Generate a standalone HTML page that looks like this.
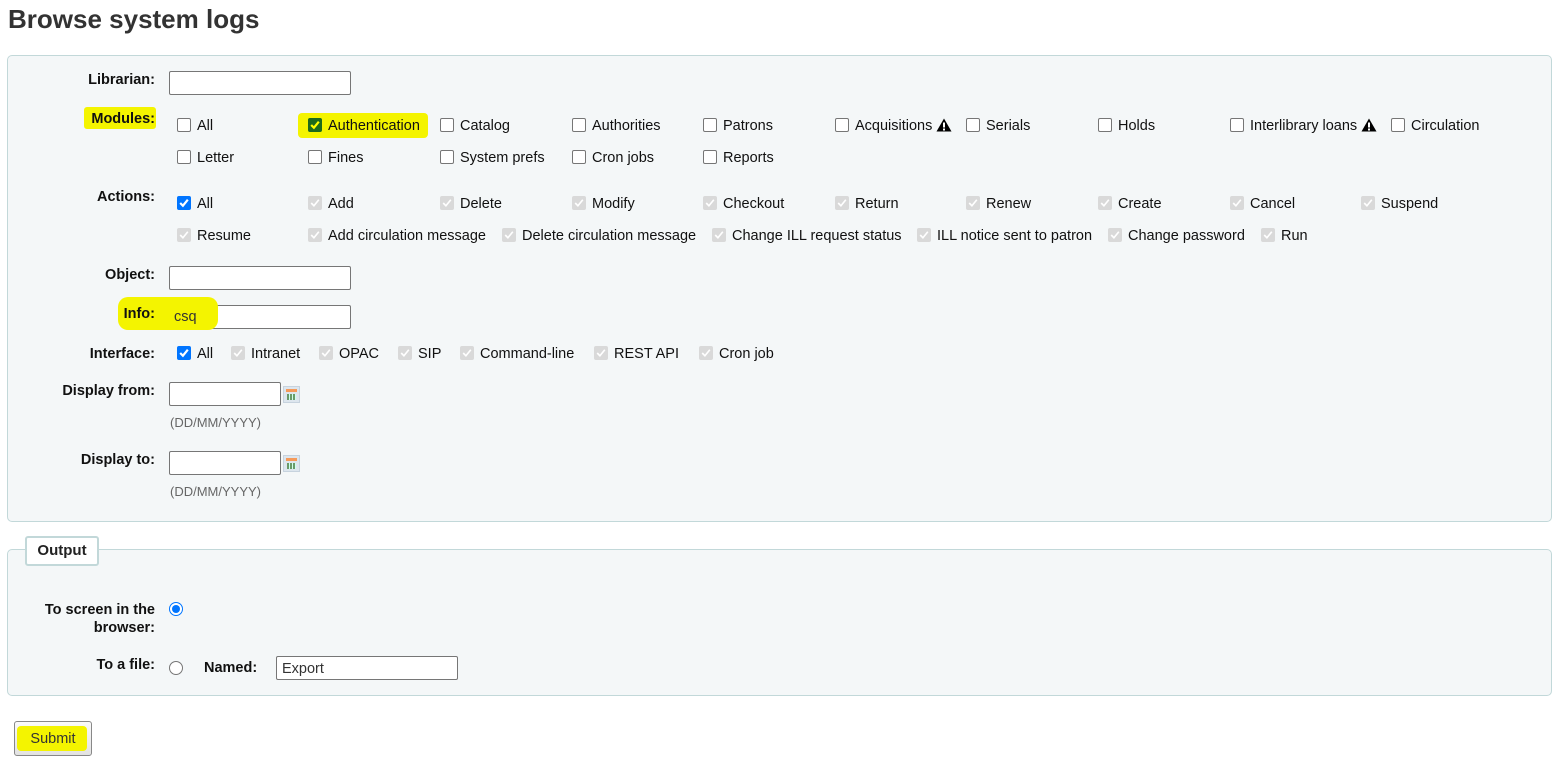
<!DOCTYPE html>
<html><head><meta charset="utf-8"><style>
body{margin:0;width:1559px;height:759px;background:#fff;font-family:"Liberation Sans",Arial,sans-serif;font-size:14.5px;color:#111;position:relative;overflow:hidden}
.a{position:absolute;white-space:nowrap}
h1{position:absolute;left:8px;top:4px;margin:0;font-size:26px;font-weight:bold;color:#333}
.fs{position:absolute;background:#f4f7f8;border:1px solid #c2d8d9;border-radius:5px}
.lb{position:absolute;right:1404px;font-weight:bold;text-align:right;white-space:nowrap;line-height:18px}
.in{position:absolute;background:#fff;border:1px solid #767676;border-radius:2px;box-sizing:border-box}
.c{position:absolute;display:flex;align-items:center;white-space:nowrap;height:18px}
.c i{display:inline-block;width:14px;height:14px;box-sizing:border-box;border-radius:2px;margin-right:6px;position:relative;top:-1px}
.u{border:1px solid #767676;background:#fff}
.b{background:#0075ff}.g{background:#1c6a1c}.d{background:#d9d9d9}
.c i svg{position:absolute;left:1px;top:1px}
.hl{background:#f4f400}
.hint{position:absolute;left:170px;color:#666;font-size:13px}
.cal{position:absolute;width:17px;height:17px;background:#dde6ee;border:1px solid #c7d3de;box-sizing:border-box}
.cal:before{content:"";position:absolute;left:2px;top:2px;width:11px;height:3px;background:#f59a5a}
.cal:after{content:"";position:absolute;left:3px;top:7px;width:9px;height:6px;background:repeating-linear-gradient(90deg,#6a9a6a 0 2px,#cfe 2px 3px)}
.tri{display:inline-block;margin-left:4px;position:relative;top:-1px}
</style></head><body>
<h1>Browse system logs</h1>
<div class="fs" style="left:7px;top:55px;width:1543px;height:465px"></div>
<div class="fs" style="left:7px;top:549px;width:1543px;height:145px"></div>
<div class="a" style="left:25px;top:536px;width:70px;height:26px;border:2px solid #c2d8d9;border-radius:3px;background:#fff;font-weight:bold;font-size:15px;text-align:center;line-height:26px;color:#222">Output</div>

<div class="lb" style="top:71px">Librarian:</div>
<div class="in" style="left:169px;top:71px;width:182px;height:24px"></div>
<div class="a hl" style="left:84px;top:107px;width:72px;height:22px;border-radius:3px"></div>
<div class="lb" style="top:110px">Modules:</div>
<div class="lb" style="top:188px">Actions:</div>
<div class="lb" style="top:266px">Object:</div>
<div class="in" style="left:169px;top:266px;width:182px;height:24px"></div>
<div class="in" style="left:169px;top:305px;width:182px;height:24px"></div>
<div class="a hl" style="left:118px;top:297px;width:100px;height:33px;border-radius:10px"></div>
<div class="lb" style="top:305px">Info:</div>
<div class="a" style="left:174px;top:309px;color:#333">csq</div>
<div class="lb" style="top:345px">Interface:</div>
<div class="lb" style="top:382px">Display from:</div>
<div class="in" style="left:169px;top:382px;width:112px;height:24px"></div>
<div class="cal" style="left:283px;top:386px"></div>
<div class="hint" style="top:415px">(DD/MM/YYYY)</div>
<div class="lb" style="top:451px">Display to:</div>
<div class="in" style="left:169px;top:451px;width:112px;height:24px"></div>
<div class="cal" style="left:283px;top:455px"></div>
<div class="hint" style="top:484px">(DD/MM/YYYY)</div>

<div class="lb" style="top:601px">To screen in the<br>browser:</div>
<div class="a" style="left:169px;top:602px;width:14px;height:14px;border-radius:50%;border:1px solid #0075ff;box-sizing:border-box;background:#fff"><div style="position:absolute;left:2px;top:2px;width:8px;height:8px;border-radius:50%;background:#0075ff"></div></div>
<div class="lb" style="top:656px">To a file:</div>
<div class="a" style="left:169px;top:661px;width:14px;height:14px;border-radius:50%;border:1px solid #767676;box-sizing:border-box;background:#fff"></div>
<div class="a" style="left:204px;top:660px;font-weight:bold">Named:</div>
<div class="in" style="left:276px;top:656px;width:182px;height:24px;padding:4px 5px;color:#333">Export</div>

<div class="a" style="left:14px;top:721px;width:78px;height:35px;border:1px solid #888;border-radius:3px;background:linear-gradient(#fafafa,#e2e2e2);box-sizing:border-box"><div style="position:absolute;left:2px;top:4px;width:70px;height:25px;background:#f4f400;border-radius:4px"></div><div style="position:absolute;left:0;right:0;top:9px;text-align:center;color:#333">Submit</div></div>

<div class="a hl" style="left:298px;top:113px;width:130px;height:25px;border-radius:4px"></div>

<!-- modules -->
<div class="c" style="left:177px;top:117px"><i class="u"></i>All</div>
<div class="c" style="left:308px;top:117px"><i class="g"><svg width="12" height="12" viewBox="0 0 11 11"><path d="M2 5.5L4.5 8L9 2.5" stroke="#ff0" stroke-width="2" fill="none"/></svg></i>Authentication</div>
<div class="c" style="left:440px;top:117px"><i class="u"></i>Catalog</div>
<div class="c" style="left:572px;top:117px"><i class="u"></i>Authorities</div>
<div class="c" style="left:703px;top:117px"><i class="u"></i>Patrons</div>
<div class="c" style="left:835px;top:117px"><i class="u"></i>Acquisitions<svg class="tri" width="16" height="14" viewBox="0 0 16 14"><path d="M8 0.5L15.5 13.5H0.5Z" fill="#000"/><rect x="7" y="4.5" width="2" height="5" fill="#fff"/><rect x="7" y="10.5" width="2" height="2" fill="#fff"/></svg></div>
<div class="c" style="left:966px;top:117px"><i class="u"></i>Serials</div>
<div class="c" style="left:1098px;top:117px"><i class="u"></i>Holds</div>
<div class="c" style="left:1230px;top:117px"><i class="u"></i>Interlibrary loans<svg class="tri" width="16" height="14" viewBox="0 0 16 14"><path d="M8 0.5L15.5 13.5H0.5Z" fill="#000"/><rect x="7" y="4.5" width="2" height="5" fill="#fff"/><rect x="7" y="10.5" width="2" height="2" fill="#fff"/></svg></div>
<div class="c" style="left:1391px;top:117px"><i class="u"></i>Circulation</div>
<div class="c" style="left:177px;top:149px"><i class="u"></i>Letter</div>
<div class="c" style="left:308px;top:149px"><i class="u"></i>Fines</div>
<div class="c" style="left:440px;top:149px"><i class="u"></i>System prefs</div>
<div class="c" style="left:572px;top:149px"><i class="u"></i>Cron jobs</div>
<div class="c" style="left:703px;top:149px"><i class="u"></i>Reports</div>

<!-- actions -->
<div class="c" style="left:177px;top:195px"><i class="b"><svg width="12" height="12" viewBox="0 0 11 11"><path d="M2 5.5L4.5 8L9 2.5" stroke="#fff" stroke-width="2" fill="none"/></svg></i>All</div>
<div class="c" style="left:308px;top:195px"><i class="d"><svg width="12" height="12" viewBox="0 0 11 11"><path d="M2 5.5L4.5 8L9 2.5" stroke="#fff" stroke-width="1.5" fill="none"/></svg></i>Add</div>
<div class="c" style="left:440px;top:195px"><i class="d"><svg width="12" height="12" viewBox="0 0 11 11"><path d="M2 5.5L4.5 8L9 2.5" stroke="#fff" stroke-width="1.5" fill="none"/></svg></i>Delete</div>
<div class="c" style="left:572px;top:195px"><i class="d"><svg width="12" height="12" viewBox="0 0 11 11"><path d="M2 5.5L4.5 8L9 2.5" stroke="#fff" stroke-width="1.5" fill="none"/></svg></i>Modify</div>
<div class="c" style="left:703px;top:195px"><i class="d"><svg width="12" height="12" viewBox="0 0 11 11"><path d="M2 5.5L4.5 8L9 2.5" stroke="#fff" stroke-width="1.5" fill="none"/></svg></i>Checkout</div>
<div class="c" style="left:835px;top:195px"><i class="d"><svg width="12" height="12" viewBox="0 0 11 11"><path d="M2 5.5L4.5 8L9 2.5" stroke="#fff" stroke-width="1.5" fill="none"/></svg></i>Return</div>
<div class="c" style="left:966px;top:195px"><i class="d"><svg width="12" height="12" viewBox="0 0 11 11"><path d="M2 5.5L4.5 8L9 2.5" stroke="#fff" stroke-width="1.5" fill="none"/></svg></i>Renew</div>
<div class="c" style="left:1098px;top:195px"><i class="d"><svg width="12" height="12" viewBox="0 0 11 11"><path d="M2 5.5L4.5 8L9 2.5" stroke="#fff" stroke-width="1.5" fill="none"/></svg></i>Create</div>
<div class="c" style="left:1230px;top:195px"><i class="d"><svg width="12" height="12" viewBox="0 0 11 11"><path d="M2 5.5L4.5 8L9 2.5" stroke="#fff" stroke-width="1.5" fill="none"/></svg></i>Cancel</div>
<div class="c" style="left:1361px;top:195px"><i class="d"><svg width="12" height="12" viewBox="0 0 11 11"><path d="M2 5.5L4.5 8L9 2.5" stroke="#fff" stroke-width="1.5" fill="none"/></svg></i>Suspend</div>
<div class="c" style="left:177px;top:227px"><i class="d"><svg width="12" height="12" viewBox="0 0 11 11"><path d="M2 5.5L4.5 8L9 2.5" stroke="#fff" stroke-width="1.5" fill="none"/></svg></i>Resume</div>
<div class="c" style="left:308px;top:227px"><i class="d"><svg width="12" height="12" viewBox="0 0 11 11"><path d="M2 5.5L4.5 8L9 2.5" stroke="#fff" stroke-width="1.5" fill="none"/></svg></i>Add circulation message</div>
<div class="c" style="left:502px;top:227px"><i class="d"><svg width="12" height="12" viewBox="0 0 11 11"><path d="M2 5.5L4.5 8L9 2.5" stroke="#fff" stroke-width="1.5" fill="none"/></svg></i>Delete circulation message</div>
<div class="c" style="left:712px;top:227px"><i class="d"><svg width="12" height="12" viewBox="0 0 11 11"><path d="M2 5.5L4.5 8L9 2.5" stroke="#fff" stroke-width="1.5" fill="none"/></svg></i>Change ILL request status</div>
<div class="c" style="left:917px;top:227px"><i class="d"><svg width="12" height="12" viewBox="0 0 11 11"><path d="M2 5.5L4.5 8L9 2.5" stroke="#fff" stroke-width="1.5" fill="none"/></svg></i>ILL notice sent to patron</div>
<div class="c" style="left:1108px;top:227px"><i class="d"><svg width="12" height="12" viewBox="0 0 11 11"><path d="M2 5.5L4.5 8L9 2.5" stroke="#fff" stroke-width="1.5" fill="none"/></svg></i>Change password</div>
<div class="c" style="left:1261px;top:227px"><i class="d"><svg width="12" height="12" viewBox="0 0 11 11"><path d="M2 5.5L4.5 8L9 2.5" stroke="#fff" stroke-width="1.5" fill="none"/></svg></i>Run</div>

<!-- interface -->
<div class="c" style="left:177px;top:345px"><i class="b"><svg width="12" height="12" viewBox="0 0 11 11"><path d="M2 5.5L4.5 8L9 2.5" stroke="#fff" stroke-width="2" fill="none"/></svg></i>All</div>
<div class="c" style="left:231px;top:345px"><i class="d"><svg width="12" height="12" viewBox="0 0 11 11"><path d="M2 5.5L4.5 8L9 2.5" stroke="#fff" stroke-width="1.5" fill="none"/></svg></i>Intranet</div>
<div class="c" style="left:319px;top:345px"><i class="d"><svg width="12" height="12" viewBox="0 0 11 11"><path d="M2 5.5L4.5 8L9 2.5" stroke="#fff" stroke-width="1.5" fill="none"/></svg></i>OPAC</div>
<div class="c" style="left:398px;top:345px"><i class="d"><svg width="12" height="12" viewBox="0 0 11 11"><path d="M2 5.5L4.5 8L9 2.5" stroke="#fff" stroke-width="1.5" fill="none"/></svg></i>SIP</div>
<div class="c" style="left:460px;top:345px"><i class="d"><svg width="12" height="12" viewBox="0 0 11 11"><path d="M2 5.5L4.5 8L9 2.5" stroke="#fff" stroke-width="1.5" fill="none"/></svg></i>Command-line</div>
<div class="c" style="left:594px;top:345px"><i class="d"><svg width="12" height="12" viewBox="0 0 11 11"><path d="M2 5.5L4.5 8L9 2.5" stroke="#fff" stroke-width="1.5" fill="none"/></svg></i>REST API</div>
<div class="c" style="left:699px;top:345px"><i class="d"><svg width="12" height="12" viewBox="0 0 11 11"><path d="M2 5.5L4.5 8L9 2.5" stroke="#fff" stroke-width="1.5" fill="none"/></svg></i>Cron job</div>
</body></html>
